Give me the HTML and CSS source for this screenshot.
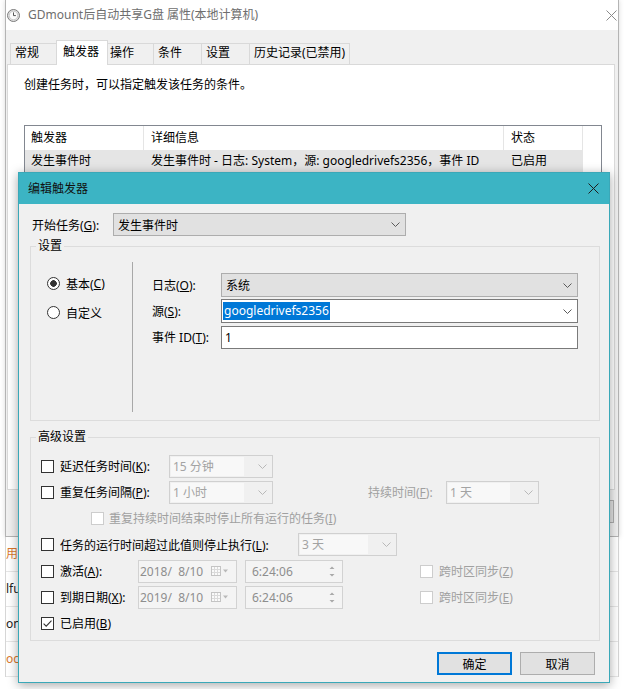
FILE: index.html
```html
<!DOCTYPE html>
<html lang="zh-CN">
<head>
    <meta charset="UTF-8">
    <meta name="viewport" content="width=device-width, initial-scale=1.0">
    <title>编辑触发器</title>
    <link rel="stylesheet" href="styles.css">
</head>
<body>
<div class="desktop">

    <!-- task properties window (inactive, behind) -->
    <div class="props-window">
        <div class="props-title">
            <svg class="app-icon" viewBox="0 0 13 13" width="13" height="13">
                <circle cx="6.5" cy="6.5" r="6" fill="#e0e0e0" stroke="#7b7b7b"/>
                <circle cx="6.5" cy="6.5" r="4.2" fill="#fbfbfb" stroke="#b5b5b5" stroke-width=".6"/>
                <path d="M6.5 3.4V6.6H8.9" fill="none" stroke="#555"/>
            </svg>
            <span class="props-caption">GDmount后自动共享G盘 属性(本地计算机)</span>
            <svg class="props-close" viewBox="0 0 11 11" width="11" height="11">
                <path d="M.5.5l10 10M10.5.5l-10 10" stroke="#8a8a8a"/>
            </svg>
        </div>
        <div class="tabs">
            <div class="tab">常规</div>
            <div class="tab active">触发器</div>
            <div class="tab">操作</div>
            <div class="tab">条件</div>
            <div class="tab">设置</div>
            <div class="tab wide">历史记录(已禁用)</div>
        </div>
        <div class="tab-panel">
            <p class="hint">创建任务时，可以指定触发该任务的条件。</p>
            <div class="trigger-table">
                <div class="trow thead">
                    <div class="tcell c1">触发器</div>
                    <div class="tcell c2">详细信息</div>
                    <div class="tcell c3">状态</div>
                </div>
                <div class="trow selected">
                    <div class="tcell c1">发生事件时</div>
                    <div class="tcell c2">发生事件时 - 日志: System，源: googledrivefs2356，事件 ID</div>
                    <div class="tcell c3">已启用</div>
                </div>
            </div>
        </div>
        <div class="props-buttons">
            <button class="btn">确定</button>
            <button class="btn">取消</button>
        </div>
    </div>

    <div class="task-list">
        <div class="task-row orange">用户登录</div>
        <div class="task-row">lfunc</div>
        <div class="task-row">online</div>
        <div class="task-row orange">ocal</div>
    </div>

    <!-- edit trigger dialog -->
    <div class="dialog">
        <div class="dlg-title">
            <span>编辑触发器</span>
            <svg viewBox="0 0 11 11" width="11" height="11">
                <path d="M.5.5l10 10M10.5.5l-10 10" stroke="#1e1e1e"/>
            </svg>
        </div>
        <div class="dlg-body">
            <div class="start-row">
                <span class="start-label">开始任务(<u>G</u>):</span>
                <div class="combo combo-start">
                    <span>发生事件时</span>
                    <svg class="chev" viewBox="0 0 9 5" width="9" height="5"><path d="M.5.5 4.5 4.5 8.5.5" fill="none" stroke="#5a5a5a"/></svg>
                </div>
            </div>

            <fieldset class="group group-basic">
                <legend>设置</legend>
                <div class="basic-layout">
                    <div class="radio-col">
                        <div class="radio-row"><span class="radio checked"></span>基本(<u>C</u>)</div>
                        <div class="radio-row"><span class="radio"></span>自定义</div>
                    </div>
                    <div class="field-col">
                        <div class="field-row">
                            <span class="field-label">日志(<u>O</u>):</span>
                            <div class="combo combo-wide">
                                <span>系统</span>
                                <svg class="chev" viewBox="0 0 9 5" width="9" height="5"><path d="M.5.5 4.5 4.5 8.5.5" fill="none" stroke="#5a5a5a"/></svg>
                            </div>
                        </div>
                        <div class="field-row">
                            <span class="field-label">源(<u>S</u>):</span>
                            <div class="combo combo-wide combo-edit">
                                <span class="sel">googledrivefs2356</span>
                                <svg class="chev" viewBox="0 0 9 5" width="9" height="5"><path d="M.5.5 4.5 4.5 8.5.5" fill="none" stroke="#5a5a5a"/></svg>
                            </div>
                        </div>
                        <div class="field-row">
                            <span class="field-label">事件 ID(<u>T</u>):</span>
                            <div class="textbox">1</div>
                        </div>
                    </div>
                </div>
            </fieldset>

            <fieldset class="group group-adv">
                <legend>高级设置</legend>
                <div class="adv-rows">
                    <div class="adv-row">
                        <span class="cb"></span>
                        <span class="adv-label w-a">延迟任务时间(<u>K</u>):</span>
                        <div class="combo disabled combo-s">
                            <span class="val">15 分钟</span>
                            <svg class="chev" viewBox="0 0 9 5" width="9" height="5"><path d="M.5.5 4.5 4.5 8.5.5" fill="none" stroke="#b8b8b8"/></svg>
                        </div>
                    </div>
                    <div class="adv-row">
                        <span class="cb"></span>
                        <span class="adv-label w-a">重复任务间隔(<u>P</u>):</span>
                        <div class="combo disabled combo-s">
                            <span class="val">1 小时</span>
                            <svg class="chev" viewBox="0 0 9 5" width="9" height="5"><path d="M.5.5 4.5 4.5 8.5.5" fill="none" stroke="#b8b8b8"/></svg>
                        </div>
                        <span class="adv-label dim dur-label">持续时间(<u>F</u>):</span>
                        <div class="combo disabled combo-d">
                            <span class="val">1 天</span>
                            <svg class="chev" viewBox="0 0 9 5" width="9" height="5"><path d="M.5.5 4.5 4.5 8.5.5" fill="none" stroke="#b8b8b8"/></svg>
                        </div>
                    </div>
                    <div class="adv-row sub">
                        <span class="cb off"></span>
                        <span class="adv-label dim">重复持续时间结束时停止所有运行的任务(<u>I</u>)</span>
                    </div>
                    <div class="adv-row tall">
                        <span class="cb"></span>
                        <span class="adv-label w-b">任务的运行时间超过此值则停止执行(<u>L</u>):</span>
                        <div class="combo disabled combo-m">
                            <span class="val">3 天</span>
                            <svg class="chev" viewBox="0 0 9 5" width="9" height="5"><path d="M.5.5 4.5 4.5 8.5.5" fill="none" stroke="#b8b8b8"/></svg>
                        </div>
                    </div>
                    <div class="adv-row">
                        <span class="cb"></span>
                        <span class="adv-label w-c">激活(<u>A</u>):</span>
                        <div class="datebox">
                            <span>2018/&nbsp; 8/10</span>
                            <svg class="cal" viewBox="0 0 18 10" width="18" height="10">
                                <rect x=".5" y=".5" width="9" height="9" fill="#fafafa" stroke="#c4c4c4"/>
                                <path d="M1 3.5h8M1 6.5h8M3.5 1v8M6.5 1v8" stroke="#dadada"/>
                                <path d="M12 3.5h5l-2.5 3z" fill="#b9b9b9"/>
                            </svg>
                        </div>
                        <div class="timebox">
                            <span>6:24:06</span>
                            <svg class="spin" viewBox="0 0 10 17" width="10" height="17">
                                <path d="M2.5 6 5 3.5 7.5 6zM2.5 11 5 13.5 7.5 11z" fill="#a9a9a9"/>
                            </svg>
                        </div>
                        <span class="cb off tz"></span>
                        <span class="adv-label dim">跨时区同步(<u>Z</u>)</span>
                    </div>
                    <div class="adv-row">
                        <span class="cb"></span>
                        <span class="adv-label w-c">到期日期(<u>X</u>):</span>
                        <div class="datebox">
                            <span>2019/&nbsp; 8/10</span>
                            <svg class="cal" viewBox="0 0 18 10" width="18" height="10">
                                <rect x=".5" y=".5" width="9" height="9" fill="#fafafa" stroke="#c4c4c4"/>
                                <path d="M1 3.5h8M1 6.5h8M3.5 1v8M6.5 1v8" stroke="#dadada"/>
                                <path d="M12 3.5h5l-2.5 3z" fill="#b9b9b9"/>
                            </svg>
                        </div>
                        <div class="timebox">
                            <span>6:24:06</span>
                            <svg class="spin" viewBox="0 0 10 17" width="10" height="17">
                                <path d="M2.5 6 5 3.5 7.5 6zM2.5 11 5 13.5 7.5 11z" fill="#a9a9a9"/>
                            </svg>
                        </div>
                        <span class="cb off tz"></span>
                        <span class="adv-label dim">跨时区同步(<u>E</u>)</span>
                    </div>
                    <div class="adv-row">
                        <span class="cb">
                            <svg viewBox="0 0 11 11" width="11" height="11"><path d="M1.6 5.6 4.2 8.2 9.5 2.6" fill="none" stroke="#333" stroke-width="1.1"/></svg>
                        </span>
                        <span class="adv-label">已启用(<u>B</u>)</span>
                    </div>
                </div>
            </fieldset>

            <div class="dlg-buttons">
                <button class="btn btn-default">确定</button>
                <button class="btn">取消</button>
            </div>
        </div>
    </div>

</div>
</body>
</html>
```

FILE: styles.css
```css
* {
    box-sizing: border-box;
}

body {
    margin: 0;
    background: #fff;
    font-family: "Noto Sans", "Noto Sans CJK SC", sans-serif;
    font-size: 12px;
    color: #000;
}

.desktop {
    position: relative;
    width: 626px;
    height: 689px;
    overflow: hidden;
}

/* ---------- properties window behind ---------- */

.props-window {
    margin-left: 5px;
    width: 614px;
    height: 537px;
    background: #f0f0f0;
    border: 1px solid #b4b4b4;
    border-top: none;
    box-shadow: 0 0 5px rgba(0, 0, 0, 0.15);
}

.props-title {
    height: 30px;
    background: #fff;
    display: flex;
    align-items: center;
    padding-left: 1px;
}

.props-caption {
    flex: 1;
    margin-left: 8px;
    color: #6e6e6e;
    line-height: 16px;
}

.props-close {
    margin-right: 1px;
}

.tabs {
    height: 34px;
    display: flex;
    align-items: flex-end;
    padding-left: 4px;
}

.tab {
    width: 48px;
    height: 21px;
    padding-left: 4px;
    line-height: 18px;
    border: 1px solid #d9d9d9;
    border-bottom: none;
    border-left: none;
    background: #f0f0f0;
    white-space: nowrap;
}

.tab:first-child {
    border-left: 1px solid #d9d9d9;
}

.tab.active {
    position: relative;
    z-index: 1;
    width: 52px;
    height: 25px;
    margin: 0 -2px -1px;
    padding-left: 6px;
    line-height: 22px;
    background: #fff;
    border-left: 1px solid #d9d9d9;
}

.tab.wide {
    width: 100px;
}

.tab-panel {
    margin: 0 3px 0 1px;
    height: 426px;
    background: #fff;
    border: 1px solid #d9d9d9;
    padding: 10px 0 0 16px;
}

.hint {
    margin: 0;
    line-height: 20px;
}

.trigger-table {
    margin-top: 30px;
    width: 578px;
    height: 250px;
    border: 1px solid #828790;
}

.trow {
    display: flex;
}

.tcell {
    padding-left: 7px;
    line-height: 22px;
    white-space: nowrap;
    overflow: hidden;
}

.thead .tcell {
    line-height: 24px;
    border-right: 1px solid #e5e5e5;
}

.trow.selected .tcell {
    background: #e5e5e5;
}

.c1 { width: 119px; padding-left: 6px; }
.c2 { width: 360px; }
.c3 { width: 79px; }

.props-buttons {
    display: flex;
    justify-content: flex-end;
    gap: 8px;
    padding: 10px 4px 0 0;
}

.task-list {
    margin-left: 5px;
    width: 614px;
    background: #fff;
    border-left: 1px solid #d6d6d6;
    border-right: 1px solid #d6d6d6;
}

.task-row {
    height: 35px;
    line-height: 34px;
    border-bottom: 1px solid #e6e6e6;
    white-space: nowrap;
    color: #222;
}

.task-row.orange {
    color: #d9782d;
}

/* ---------- edit trigger dialog ---------- */

.dialog {
    position: absolute;
    left: 18px;
    top: 172px;
    width: 592px;
    height: 511px;
    background: #f0f0f0;
    border: 1px solid #3aa8b8;
    box-shadow: 0 2px 10px rgba(0, 0, 0, 0.35);
}

.dlg-title {
    height: 31px;
    background: #3cb4c4;
    display: flex;
    align-items: center;
    justify-content: space-between;
    padding: 0 10px 0 9px;
    line-height: 16px;
    color: #111;
}

.dlg-body {
    padding: 9px 9px 0 11px;
}

.start-row {
    display: flex;
    align-items: center;
    height: 23px;
}

.start-label {
    width: 83px;
    padding-left: 2px;
}

.combo {
    display: flex;
    align-items: center;
    justify-content: space-between;
    height: 23px;
    padding: 0 5px 0 4px;
    background: #e1e1e1;
    border: 1px solid #adadad;
    white-space: nowrap;
}

.combo-start {
    width: 293px;
}

.combo-wide {
    width: 357px;
    height: 24px;
}

.combo-edit {
    background: #fff;
    border-color: #7a7a7a;
    padding-left: 1px;
}

.sel {
    background: #0078d7;
    color: #fff;
    line-height: 18px;
    padding: 0 1px;
}

.chev {
    flex: none;
}

.textbox {
    width: 357px;
    height: 23px;
    background: #fff;
    border: 1px solid #7a7a7a;
    padding-left: 3px;
    line-height: 21px;
}

.group {
    margin: 0;
    padding: 0;
    width: 570px;
    min-width: 0;
    border: 1px solid #dcdcdc;
}

.group legend {
    margin-left: 5px;
    padding: 0 2px;
    line-height: 16px;
}

.group-basic {
    margin-top: 2px;
}

.basic-layout {
    display: flex;
    padding: 8px 0 8px;
}

.radio-col {
    width: 101px;
    padding: 7px 0 0 16px;
}

.radio-row {
    display: flex;
    align-items: center;
    height: 29px;
}

.radio {
    width: 13px;
    height: 13px;
    margin-right: 6px;
    border: 1px solid #333;
    border-radius: 50%;
    background: #fff;
}

.radio.checked {
    background: radial-gradient(circle, #333 0 3px, #fff 3.6px);
}

.field-col {
    height: 150px;
    padding: 11px 0 0 19px;
    border-left: 1px solid #a8a8a8;
}

.field-row {
    display: flex;
    align-items: center;
    height: 24px;
    margin-bottom: 2px;
}

.field-label {
    width: 69px;
}

.group-adv {
    margin-top: 8px;
}

.adv-rows {
    padding: 8px 0 4px 10px;
}

.adv-row {
    display: flex;
    align-items: center;
    height: 26px;
    white-space: nowrap;
}

.adv-row.tall {
    height: 27px;
}

.adv-row.sub {
    padding-left: 50px;
}

.cb {
    flex: none;
    display: flex;
    align-items: center;
    justify-content: center;
    width: 13px;
    height: 13px;
    margin-right: 6px;
    border: 1px solid #333;
    background: #fff;
}

.cb.off {
    border-color: #cdcdcd;
    margin-right: 5px;
}

.cb.tz {
    margin-left: 77px;
    margin-right: 6px;
}

.w-a { width: 109px; }
.w-b { width: 238px; }
.w-c { width: 78px; }

.dim {
    color: #a0a0a0;
}

.dur-label {
    width: 78px;
    margin-left: 95px;
}

.combo.disabled {
    height: 23px;
    padding: 0 5px 0 0;
    background: #f0f0f0;
    border-color: #d0d0d0;
    color: #a3a3a3;
}

.combo.disabled .val {
    flex: 1;
    align-self: stretch;
    margin: 1px 14px 1px 1px;
    padding-left: 2px;
    line-height: 19px;
    background: #f8f8f8;
}

.combo-s { width: 104px; }
.combo-d { width: 93px; }
.combo-m { width: 99px; }

.datebox,
.timebox {
    display: flex;
    align-items: center;
    justify-content: space-between;
    height: 23px;
    background: #f4f4f4;
    border: 1px solid #d2d2d2;
    color: #8e8e8e;
}

.datebox {
    width: 99px;
    padding: 0 7px 0 1px;
}

.timebox {
    width: 98px;
    margin-left: 8px;
    padding: 0 5px 0 6px;
}

.btn {
    width: 75px;
    height: 23px;
    padding: 0;
    background: #e1e1e1;
    border: 1px solid #adadad;
    font-family: inherit;
    font-size: 12px;
    color: #000;
}

.btn-default {
    border: 2px solid #0078d7;
}

.dlg-buttons {
    display: flex;
    justify-content: flex-end;
    gap: 8px;
    margin-top: 11px;
    padding-right: 5px;
}
```
